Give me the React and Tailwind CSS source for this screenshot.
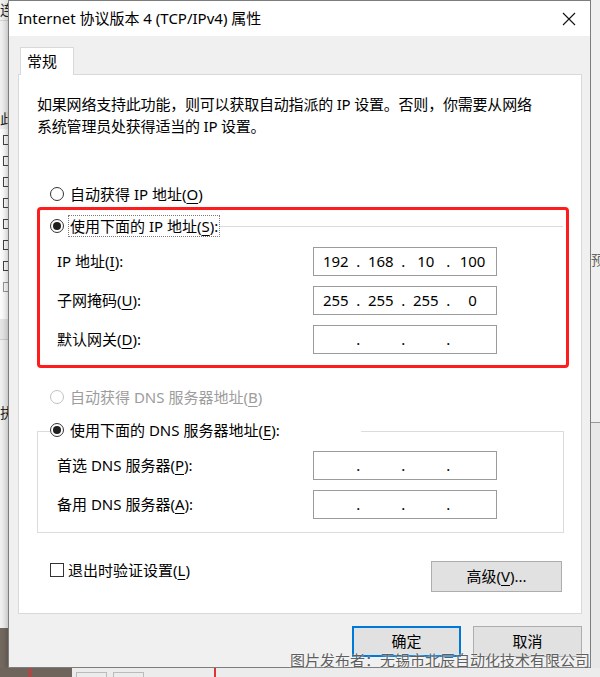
const FONT = "font-['Noto_Sans','Noto_Sans_CJK_SC',sans-serif]";

function Radio({ checked, disabled }) {
  return (
    <span
      className={`flex h-[14px] w-[14px] shrink-0 items-center justify-center rounded-full border bg-white ${
        disabled ? 'border-[#c2c2c2]' : 'border-[#333333]'
      }`}
    >
      {checked && <span className="h-[8px] w-[8px] rounded-full bg-[#1f1f1f]" />}
    </span>
  );
}

function Key({ children }) {
  return <span className="underline decoration-1 underline-offset-[3px]">{children}</span>;
}

function IpBox({ parts = ['', '', '', ''] }) {
  return (
    <div className="flex h-[29px] w-[184px] items-center border border-[#9b9b9b] bg-white pl-[3px] text-[15px] text-black">
      {parts.map((p, i) => (
        <div key={i} className="flex w-[45px] items-center">
          <span className="w-[41px] text-center">{p}</span>
          {i < 3 && <span className="w-[8px] text-center">.</span>}
        </div>
      ))}
    </div>
  );
}

function FieldRow({ label, parts }) {
  return (
    <div className="flex items-center">
      <span className="w-[256px] whitespace-nowrap text-[15px]">{label}</span>
      <IpBox parts={parts} />
    </div>
  );
}

function LeftStrip() {
  return (
    <div className="flex h-full w-[8px] flex-col overflow-hidden bg-[#f2f2f2]">
      <div className="h-[20px] w-[14px] text-[14px] leading-[20px] text-[#222]">连</div>
      <div className="h-[1px] bg-[#d6d6d6]" />
      <div className="mt-[88px] h-[20px] w-[14px] text-[14px] leading-[20px] text-[#222]">此</div>
      <div className="flex h-[190px] flex-col gap-[11px] bg-white pt-[6px]">
        {[0, 1, 2, 3, 4, 5, 6].map((i) => (
          <span key={i} className="ml-[3px] h-[10px] w-[6px] border border-r-0 border-[#444]" />
        ))}
        <span className="ml-[3px] h-[10px] w-[6px] border border-r-0 border-[#999]" />
      </div>
      <div className="h-[20px] bg-[#e8e8e8]" />
      <div className="h-[1px] bg-[#cfcfcf]" />
      <div className="mt-[62px] h-[20px] w-[14px] text-[14px] text-[#222]">执</div>
      <div className="flex-1" />
      <div className="h-[40px] bg-[#746a60]" />
    </div>
  );
}

function RightStrip() {
  return (
    <div className="flex h-full w-[9px] flex-col overflow-hidden bg-[#f0f0f0]">
      <div className="mt-[250px] h-[20px] w-[14px] text-[14px] leading-[20px] text-[#666]">预</div>
      <div className="flex-1" />
      <div className="h-[1px] bg-[#999]" />
      <div className="h-[245px] bg-[#e8e8e8]" />
    </div>
  );
}

export default function App() {
  return (
    <div className={`relative flex h-[677px] w-[600px] flex-col overflow-hidden bg-[#f0f0f0] ${FONT} text-black`}>
      <div className="flex h-[668px]">
        <LeftStrip />
        {/* dialog window */}
        <div className="flex w-[583px] flex-col border border-[#7d7d7d] bg-[#f0f0f0] shadow-[0_2px_8px_rgba(0,0,0,0.35)]">
          <div className="flex h-[35px] items-center justify-between bg-white pl-[9px] pr-[14px]">
            <span className="text-[15px]">Internet 协议版本 4 (TCP/IPv4) 属性</span>
            <svg width="14" height="14" viewBox="0 0 14 14">
              <path d="M1 1 L13 13 M13 1 L1 13" stroke="#111" strokeWidth="1.1" />
            </svg>
          </div>

          <div className="flex flex-col pl-[9px] pr-[8px]">
            {/* tab */}
            <div className="relative z-10 -mb-px mt-[11px] ml-[2px] flex h-[28px] w-[54px] items-center border border-b-0 border-[#d9d9d9] bg-white pl-[6px] text-[15px]">
              常规
            </div>

            {/* tab panel */}
            <div className="flex h-[540px] flex-col border border-[#d9d9d9] bg-white px-[18px] pt-[18px]">
              <p className="text-[15px] leading-[22px] tracking-[-0.2px]">
                如果网络支持此功能，则可以获取自动指派的 IP 设置。否则，你需要从网络
                <br />
                系统管理员处获得适当的 IP 设置。
              </p>

              <div className="mt-[46px] flex h-[22px] items-center gap-[6px] pl-[13px] text-[15px]">
                <Radio />
                <span>
                  自动获得 IP 地址(<Key>O</Key>)
                </span>
              </div>

              {/* highlighted IP block */}
              <div className="mt-[2px] flex h-[161px] w-[532px] flex-col rounded-[4px] border-[3px] border-[#ff1c1c] pt-[5px]">
                <div className="flex h-[22px] items-center pl-[10px] pr-[3px]">
                  <Radio checked />
                  <span className="ml-[5px] whitespace-nowrap px-[1px] text-[15px] leading-[20px] outline outline-1 outline-dotted outline-[#7a7a7a]">
                    使用下面的 IP 地址(<Key>S</Key>):
                  </span>
                  <span className="ml-[1px] h-px flex-1 bg-[#dcdcdc]" />
                </div>
                <div className="mt-[10px] flex flex-col gap-[10px] pl-[17px]">
                  <FieldRow label={<>IP 地址(<Key>I</Key>):</>} parts={['192', '168', '10', '100']} />
                  <FieldRow label={<>子网掩码(<Key>U</Key>):</>} parts={['255', '255', '255', '0']} />
                  <FieldRow label={<>默认网关(<Key>D</Key>):</>} />
                </div>
              </div>

              <div className="mt-[18px] flex h-[22px] items-center gap-[6px] pl-[13px] text-[15px] text-[#9d9d9d]">
                <Radio disabled />
                <span>
                  自动获得 DNS 服务器地址(<Key>B</Key>)
                </span>
              </div>

              {/* DNS group box */}
              <div className="mt-[23px] flex w-[527px] flex-col border border-[#dcdcdc] pb-[13px]">
                <div className="-mt-[13px] ml-[12px] flex h-[22px] w-[311px] items-center gap-[6px] bg-white text-[15px]">
                  <Radio checked />
                  <span className="whitespace-nowrap">
                    使用下面的 DNS 服务器地址(<Key>E</Key>):
                  </span>
                </div>
                <div className="mt-[10px] flex flex-col gap-[10px] pl-[19px]">
                  <FieldRow label={<>首选 DNS 服务器(<Key>P</Key>):</>} />
                  <FieldRow label={<>备用 DNS 服务器(<Key>A</Key>):</>} />
                </div>
              </div>

              <div className="ml-[13px] mt-[27px] flex w-[512px] items-start justify-between">
                <div className="flex h-[20px] items-center gap-[4px] text-[15px]">
                  <span className="h-[14px] w-[14px] border border-[#333] bg-white" />
                  <span>
                    退出时验证设置(<Key>L</Key>)
                  </span>
                </div>
                <button className="mt-px flex h-[31px] w-[131px] items-center justify-center border border-[#adadad] bg-[#e1e1e1] text-[15px]">
                  高级(<Key>V</Key>)...
                </button>
              </div>
            </div>

            <div className="mt-[12px] flex justify-end gap-[12px]">
              <button className="flex h-[31px] w-[109px] items-center justify-center border-2 border-[#0078d7] bg-[#e1e1e1] text-[15px]">
                确定
              </button>
              <button className="flex h-[31px] w-[109px] items-center justify-center border border-[#adadad] bg-[#e1e1e1] text-[15px]">
                取消
              </button>
            </div>
          </div>
        </div>
        <RightStrip />
      </div>

      <div className="flex h-[9px]">
        <div className="h-full w-[72px] bg-[#6f655c]">
          <div className="ml-[29px] h-full w-[2px] bg-[#d33]" />
        </div>
        <div className="flex h-full flex-1 items-end gap-[6px] bg-[#ececec] pl-[4px]">
          <span className="h-[5px] w-[31px] border border-b-0 border-[#bbb]" />
          <span className="h-[5px] w-[31px] border border-b-0 border-[#bbb]" />
          <span className="ml-[64px] h-full w-[2px] bg-[#d33]" />
        </div>
      </div>

      {/* watermark */}
      <div className="pointer-events-none absolute right-[10px] top-[651px] text-[15px] leading-[18px] text-[#5f5f5f] [text-shadow:0_0_2px_#fff]">
        图片发布者：无锡市北辰自动化技术有限公司
      </div>
    </div>
  );
}
